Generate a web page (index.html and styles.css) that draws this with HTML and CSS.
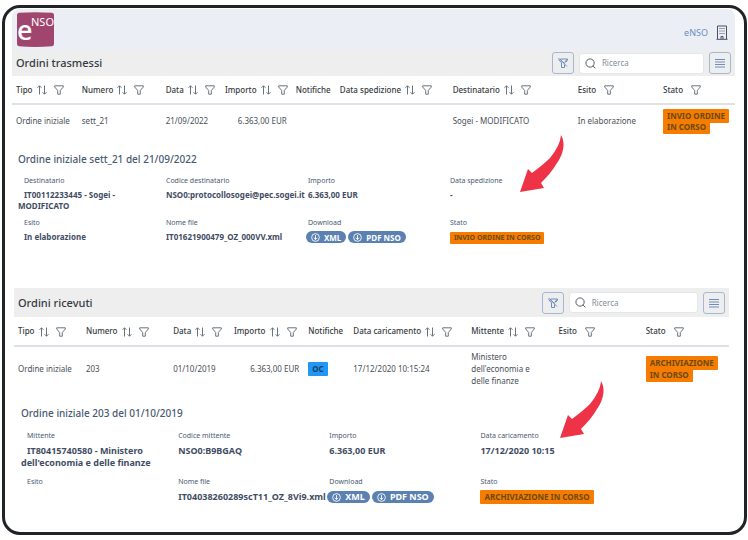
FILE: index.html
```html
<!doctype html>
<html lang="it">
    <head>
        <meta charset="utf-8">
        <title>eNSO</title>
        <link rel="stylesheet" href="styles.css">
    </head>
    <body>
        <svg class="defs" aria-hidden="true">
            <symbol id="sort" viewBox="0 0 10 10">
                <path d="M2.5 9.5V.8M.5 2.8l2-2 2 2M7.5.5v8.7M5.5 7.200l2 2 2-2"/>
            </symbol>
            <symbol id="filter" viewBox="0 0 10 10">
                <path d="M.7.8h8.600v1.200L6.300 5.500v3.700H3.700V5.500L.7 2z"/>
            </symbol>
            <symbol id="filter-off" viewBox="0 0 12 12">
                <path d="M3.500 2h7L7.500 5.500M7.500 7.500V10.500h-3V5.800L1.500 2.500M1.500 1l8.500 8.500M8.500 4.300l1.500 0M3 2l4.500 4.500M10.500 2v1.200L8.300 5.500"/>
            </symbol>
            <symbol id="search" viewBox="0 0 12 12">
                <circle cx="5.500" cy="5.500" r="4.500"/><path d="M8.600 8.600l2.700 2.700"/>
            </symbol>
            <symbol id="list" viewBox="0 0 12 12">
                <path d="M1 2.500h10M1 5h10M1 7.500h10M1 10h10"/>
            </symbol>
            <symbol id="download" viewBox="0 0 10 10">
                <circle cx="5" cy="5" r="4.300"/><path d="M5 2.300v5M3 5.300l2 2 2-2"/>
            </symbol>
            <symbol id="arrow" viewBox="0 0 44 57">
                <path d="M0 57 8 34l4 4Q24 29 30 23 40 11 41 0c5 8 2 20-4 28-4 7-10 14-16 20l3 5z"/>
            </symbol>
        </svg>
        <main class="frame">
            <header class="top">
                <svg class="logo" viewBox="0 0 37 35" role="img" aria-label="eNSO">
                    <path class="logo-bg" d="M2 .8Q18 -.4 35 .8 37 1 37 3v29q0 2-2 2.300-17 1.300-33 0Q0 34 0 32V3Q0 1 2 .8z"/>
                    <text class="logo-e" x="0" y="28">e</text>
                    <text class="logo-nso" x="14" y="14">NSO</text>
                </svg>
                <a class="account" href="#">eNSO
                    <svg class="building" viewBox="0 0 12 15" aria-hidden="true">
                        <path d="M1.500 14V1h9v13M.5 14.300h11M5 14v-2.500h2V14"/>
                        <path class="windows" d="M3.500 3.500h5.500M3.500 6h5.500M3.500 8.500h5.500"/>
                    </svg>
                </a>
            </header>

            <section class="orders sent">
                <div class="bar">
                    <h2>Ordini trasmessi</h2>
                    <button class="tool" aria-label="Rimuovi filtri"><svg><use href="#filter-off"/></svg></button>
                    <label class="search"><svg><use href="#search"/></svg><input type="search" placeholder="Ricerca" aria-label="Ricerca"></label>
                    <button class="tool" aria-label="Colonne"><svg><use href="#list"/></svg></button>
                </div>
                <table>
                    <thead>
                        <tr>
                            <th class="tipo">Tipo <svg><use href="#sort"/></svg><svg><use href="#filter"/></svg></th>
                            <th class="numero">Numero <svg><use href="#sort"/></svg><svg><use href="#filter"/></svg></th>
                            <th class="data">Data <svg><use href="#sort"/></svg><svg><use href="#filter"/></svg></th>
                            <th class="importo">Importo <svg><use href="#sort"/></svg><svg><use href="#filter"/></svg></th>
                            <th class="notifiche">Notifiche</th>
                            <th class="spedizione">Data spedizione <svg><use href="#sort"/></svg><svg><use href="#filter"/></svg></th>
                            <th class="soggetto">Destinatario <svg><use href="#sort"/></svg><svg><use href="#filter"/></svg></th>
                            <th class="esito">Esito <svg><use href="#filter"/></svg></th>
                            <th class="stato">Stato <svg><use href="#filter"/></svg></th>
                        </tr>
                    </thead>
                    <tbody>
                        <tr>
                            <td>Ordine iniziale</td>
                            <td>sett_21</td>
                            <td>21/09/2022</td>
                            <td class="amount">6.363,00 EUR</td>
                            <td></td>
                            <td></td>
                            <td>Sogei - MODIFICATO</td>
                            <td>In elaborazione</td>
                            <td class="state"><span class="tag">INVIO ORDINE<br>IN CORSO</span></td>
                        </tr>
                    </tbody>
                </table>
                <div class="detail">
                    <h3>Ordine iniziale sett_21 del 21/09/2022</h3>
                    <dl>
                        <div><dt>Destinatario</dt><dd>IT00112233445 - Sogei -<br>MODIFICATO</dd></div>
                        <div><dt>Codice destinatario</dt><dd>NSO0:protocollosogei@pec.sogei.it</dd></div>
                        <div><dt>Importo</dt><dd>6.363,00 EUR</dd></div>
                        <div><dt>Data spedizione</dt><dd>-</dd></div>
                        <div><dt>Esito</dt><dd>In elaborazione</dd></div>
                        <div><dt>Nome file</dt><dd>IT01621900479_OZ_000VV.xml</dd></div>
                        <div>
                            <dt>Download</dt>
                            <dd class="downloads">
                                <button><svg><use href="#download"/></svg>XML</button>
                                <button><svg><use href="#download"/></svg>PDF NSO</button>
                            </dd>
                        </div>
                        <div><dt>Stato</dt><dd class="status"><span class="tag">INVIO ORDINE IN CORSO</span></dd></div>
                    </dl>
                    <svg class="arrow" aria-hidden="true"><use href="#arrow"/></svg>
                </div>
            </section>

            <section class="orders received">
                <div class="bar">
                    <h2>Ordini ricevuti</h2>
                    <button class="tool" aria-label="Rimuovi filtri"><svg><use href="#filter-off"/></svg></button>
                    <label class="search"><svg><use href="#search"/></svg><input type="search" placeholder="Ricerca" aria-label="Ricerca"></label>
                    <button class="tool" aria-label="Colonne"><svg><use href="#list"/></svg></button>
                </div>
                <table>
                    <thead>
                        <tr>
                            <th class="tipo">Tipo <svg><use href="#sort"/></svg><svg><use href="#filter"/></svg></th>
                            <th class="numero">Numero <svg><use href="#sort"/></svg><svg><use href="#filter"/></svg></th>
                            <th class="data">Data <svg><use href="#sort"/></svg><svg><use href="#filter"/></svg></th>
                            <th class="importo">Importo <svg><use href="#sort"/></svg><svg><use href="#filter"/></svg></th>
                            <th class="notifiche">Notifiche</th>
                            <th class="spedizione">Data caricamento <svg><use href="#sort"/></svg><svg><use href="#filter"/></svg></th>
                            <th class="soggetto">Mittente <svg><use href="#sort"/></svg><svg><use href="#filter"/></svg></th>
                            <th class="esito">Esito <svg><use href="#filter"/></svg></th>
                            <th class="stato">Stato <svg><use href="#filter"/></svg></th>
                        </tr>
                    </thead>
                    <tbody>
                        <tr>
                            <td>Ordine iniziale</td>
                            <td>203</td>
                            <td>01/10/2019</td>
                            <td class="amount">6.363,00 EUR</td>
                            <td><span class="tag info">OC</span></td>
                            <td>17/12/2020 10:15:24</td>
                            <td>Ministero<br>dell'economia e<br>delle finanze</td>
                            <td></td>
                            <td class="state"><span class="tag">ARCHIVIAZIONE<br>IN CORSO</span></td>
                        </tr>
                    </tbody>
                </table>
                <div class="detail">
                    <h3>Ordine iniziale 203 del 01/10/2019</h3>
                    <dl>
                        <div><dt>Mittente</dt><dd>IT80415740580 - Ministero<br>dell'economia e delle finanze</dd></div>
                        <div><dt>Codice mittente</dt><dd>NSO0:B9BGAQ</dd></div>
                        <div><dt>Importo</dt><dd>6.363,00 EUR</dd></div>
                        <div><dt>Data caricamento</dt><dd>17/12/2020 10:15</dd></div>
                        <div><dt>Esito</dt><dd></dd></div>
                        <div><dt>Nome file</dt><dd>IT04038260289scT11_OZ_8Vi9.xml</dd></div>
                        <div>
                            <dt>Download</dt>
                            <dd class="downloads">
                                <button><svg><use href="#download"/></svg>XML</button>
                                <button><svg><use href="#download"/></svg>PDF NSO</button>
                            </dd>
                        </div>
                        <div><dt>Stato</dt><dd class="status"><span class="tag">ARCHIVIAZIONE IN CORSO</span></dd></div>
                    </dl>
                    <svg class="arrow" aria-hidden="true"><use href="#arrow"/></svg>
                </div>
            </section>
        </main>
    </body>
</html>
```
FILE: styles.css
```css
* {
    box-sizing: border-box;
}
body {
    margin: 0;
    padding: 5px 1px 5px 2px;
    min-height: 100vh;
    display: flex;
    background: white;
    color: #495057;
    font: 8px/12px "Noto Sans", "Open Sans", sans-serif;
}
svg {
    fill: none;
    stroke: currentColor;
}
.defs {
    display: none;
}
.frame {
    flex: 1;
    min-width: 0;
    border: 3px solid #202327;
    border-radius: 18px;
    padding: 1px 9px 0 7px;
}
h2, h3, dl, dd {
    margin: 0;
}

.top {
    display: flex;
    align-items: center;
    justify-content: space-between;
    height: 41px;
    padding: 0 7px 0 5px;
    background: #ebeef4;
    border-radius: 8px 8px 0 0;
}
.logo {
    width: 37px;
    height: 35px;
    stroke: none;
    overflow: visible;
}
.logo-bg {
    fill: #9f456e;
}
.logo text {
    fill: white;
}
.logo-e {
    font-size: 27px;
    font-weight: 500;
}
.logo-nso {
    font-size: 11px;
}
.account {
    display: flex;
    align-items: center;
    gap: 8px;
    padding-top: 6px;
    color: #6c8ebf;
    font-size: 9px;
    text-decoration: none;
}
.building {
    width: 12px;
    height: 15px;
    color: #495067;
}
.windows {
    stroke-dasharray: 1 1;
}

.bar {
    display: flex;
    align-items: center;
    gap: 5px;
    height: 26px;
    padding: 0 4px;
    background: #eee;
}
.bar h2 {
    flex: 1;
    color: #343a40;
    font-size: 11px;
    font-weight: 500;
}
.tool {
    display: grid;
    place-items: center;
    width: 22px;
    height: 22px;
    padding: 0;
    border: 1px solid #a3b8d3;
    border-radius: 3px;
    background: none;
    color: #6c8ebf;
}
.tool svg {
    width: 12px;
    height: 12px;
}
.search {
    display: flex;
    align-items: center;
    gap: 6px;
    width: 17.5%;
    height: 21px;
    padding: 0 5px;
    border: 1px solid #e3e6ea;
    border-radius: 3px;
    background: white;
}
.search svg {
    flex: none;
    width: 11px;
    height: 11px;
}
.search input {
    width: 100%;
    min-width: 0;
    padding: 0;
    border: 0;
    outline: 0;
    background: none;
    font: inherit;
}
.search input::placeholder {
    color: #868e96;
}

table {
    width: 100%;
    table-layout: fixed;
    border-collapse: collapse;
}
th, td {
    padding: 0 4px;
    text-align: left;
    white-space: nowrap;
}
th {
    height: 28px;
    border-bottom: 2px solid #dee2e6;
    color: #343a40;
    font-weight: 500;
}
th svg {
    width: 10px;
    height: 10px;
    margin-left: 2px;
    vertical-align: middle;
    color: #6c757d;
}
th svg + svg {
    margin-left: 7px;
}
.esito svg, .stato svg {
    margin-left: 6px;
}
td {
    height: 32px;
}
.amount {
    padding-right: 5px;
    text-align: right;
}
.tag {
    padding: 1px 4px 2px;
    border-radius: 1px;
    background: #f57c00;
    color: #6b4a12;
    font-weight: 700;
    white-space: nowrap;
    -webkit-box-decoration-break: clone;
    box-decoration-break: clone;
}
.info {
    background: #2196f3;
    color: #12436b;
}
.state {
    line-height: 11px;
}

.sent .tipo { width: 9.1%; }
.sent .numero { width: 11.6%; }
.sent .data { width: 8.2%; }
.sent .importo { width: 9.8%; }
.sent .notifiche { width: 6.1%; }
.sent .spedizione { width: 15.6%; }
.sent .soggetto { width: 17.3%; }
.sent .esito { width: 11.8%; }

.received .tipo { width: 9.5%; }
.received .numero { width: 12.2%; }
.received .data { width: 8.5%; }
.received .importo { width: 10.4%; }
.received .notifiche { width: 6.3%; }
.received .spedizione { width: 16.5%; }
.received .soggetto { width: 12.2%; }
.received .esito { width: 12.2%; }

.detail {
    position: relative;
    padding: 16px 0 0 6px;
    color: #495a70;
}
.detail h3 {
    margin-bottom: 10px;
    font-size: 10px;
    font-weight: 500;
    line-height: 14px;
}
dl {
    display: grid;
    grid-template-columns: repeat(4, minmax(0, 1fr));
    row-gap: 7px;
}
dt, dd {
    text-indent: 6px;
    white-space: nowrap;
}
dt {
    margin-bottom: 3px;
    font-size: 7px;
    line-height: 10px;
}
dd {
    color: #3f4d63;
    font-weight: 700;
    line-height: 11px;
}
.downloads {
    display: flex;
    gap: 2px;
    padding-left: 4px;
    text-indent: 0;
}
.downloads button {
    display: flex;
    align-items: center;
    gap: 4px;
    height: 12px;
    padding: 0 5px;
    border: 0;
    border-radius: 6px;
    background: #5b80b2;
    color: white;
    font: inherit;
}
.downloads svg {
    width: 9px;
    height: 9px;
}
.status {
    padding-left: 6px;
    text-indent: 0;
}
.status .tag {
    font-size: 7px;
}
.arrow {
    position: absolute;
    top: -1px;
    left: 70.2%;
    width: 44px;
    height: 57px;
    fill: #ee3346;
    stroke: none;
}

.sent dl {
    width: 79.2%;
}
.received {
    margin: 45px 6px 0 2px;
}
.received .bar {
    height: 29px;
}
.received .search {
    width: 18.3%;
}
.received th {
    height: 29px;
}
.received td {
    height: 44px;
}
.received .state {
    line-height: 12px;
}
.received .detail {
    padding-left: 7px;
}
.received h3 {
    margin-bottom: 11px;
}
.received dl {
    width: 85.4%;
    row-gap: 8px;
}
.received dt {
    margin-bottom: 4px;
}
.received dd {
    font-size: 9px;
    line-height: 12px;
}
.received .status .tag {
    font-size: 8px;
}
.received .arrow {
    top: -9px;
    left: 76.4%;
}
```
